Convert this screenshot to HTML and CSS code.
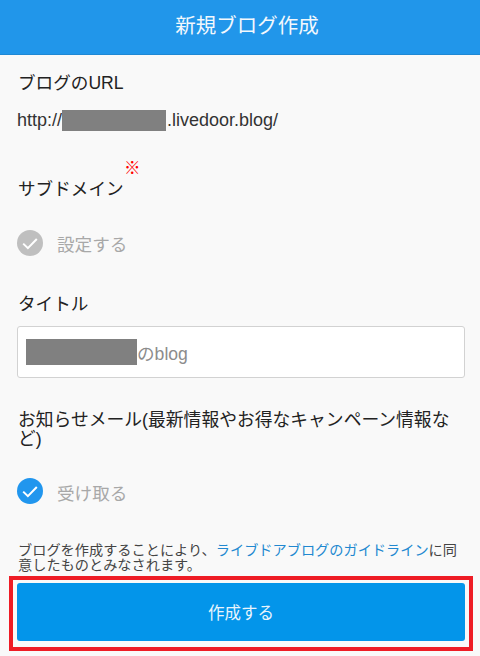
FILE: index.html
```html
<!DOCTYPE html>
<html lang="ja">
<head>
<meta charset="utf-8">
<title>新規ブログ作成</title>
<link rel="stylesheet" href="styles.css">
</head>
<body>
<header class="bar">新規ブログ作成</header>
<main class="form">
  <section class="url-block">
    <div class="label">ブログのURL</div>
    <div class="url"><span>http://</span><span class="mask mask-url"></span><span>.livedoor.blog/</span></div>
  </section>
  <section class="sub-block">
    <div class="label">サブドメイン<span class="req">※</span></div>
    <div class="check check-off">
      <svg class="tick" viewBox="0 0 26 26"><circle cx="13" cy="13" r="13" fill="#bfbfbf"/><path d="M6.2 13.6l4.7 4.6 8.9-9.2" fill="none" stroke="#fff" stroke-width="2"/></svg>
      <span>設定する</span>
    </div>
  </section>
  <section class="title-block">
    <div class="label">タイトル</div>
    <div class="input"><span class="mask mask-title"></span><span>のblog</span></div>
  </section>
  <section class="mail-block">
    <div class="label label-wrap">お知らせメール(最新情報やお得なキャンペーン情報など)</div>
    <div class="check check-on">
      <svg class="tick" viewBox="0 0 26 26"><circle cx="13" cy="13" r="13" fill="#2196ee"/><path d="M6.2 13.6l4.7 4.6 8.9-9.2" fill="none" stroke="#fff" stroke-width="2"/></svg>
      <span>受け取る</span>
    </div>
  </section>
  <p class="note">ブログを作成することにより、<a href="#">ライブドアブログのガイドライン</a>に同意したものとみなされます。</p>
</main>
<div class="highlight"><button class="submit" type="button">作成する</button></div>
</body>
</html>
```
FILE: styles.css
```css
* { box-sizing: border-box; }
html, body { margin: 0; padding: 0; }
body {
  width: 480px;
  height: 656px;
  overflow: hidden;
  background: #f9f9f9;
  color: #222;
  font-family: "Liberation Sans", "Noto Sans CJK JP", sans-serif;
  font-size: 18px;
}
.bar {
  height: 55px;
  padding-left: 14px;
  background: #2196ea;
  border-bottom: 1px solid #1f88d4;
  color: #f2f8fd;
  font-size: 20.5px;
  line-height: 52px;
  text-align: center;
}
.form { padding: 0 15px 0 18px; }
.label { font-size: 17.6px; line-height: 22px; position: relative; }
.url-block { padding-top: 17px; }
.url {
  display: flex;
  align-items: center;
  height: 22px;
  margin-top: 15px;
  margin-left: -1px;
  font-size: 18px;
  color: #333;
}
.mask { display: block; background: #808080; }
.mask-url { width: 104px; height: 21px; margin-right: 1px; }
.sub-block { padding-top: 47px; }
.req {
  position: absolute;
  left: 106px;
  top: -19px;
  color: #f00;
  font-size: 16.5px;
  line-height: 18px;
}
.check { display: flex; align-items: center; gap: 14px; color: #a8a8a8; font-size: 17.6px; }
.tick { width: 26px; height: 26px; flex: none; margin-left: -1px; }
.check-on span { position: relative; top: 1px; }
.sub-block .check { margin-top: 30px; }
.title-block { padding-top: 37px; }
.input {
  display: flex;
  align-items: center;
  height: 52px;
  margin-top: 11px;
  width: 448px;
  margin-left: -1px;
  padding-left: 8px;
  background: #fff;
  border: 1px solid #d2d2d2;
  border-radius: 3px;
  color: #8c8c8c;
  font-size: 17.6px;
}
.mask-title { width: 111px; height: 26px; }
.mail-block { padding-top: 33px; }
.label-wrap { font-size: 17.8px; line-height: 19px; }
.mail-block .check { margin-top: 29px; }
.note {
  margin: 39px 0 0;
  font-size: 14.2px;
  line-height: 15px;
  color: #444;
}
.note a { color: #2188d0; text-decoration: none; }
.highlight {
  margin: 3px 7px 0 9px;
  height: 75px;
  padding: 3px 4px;
  border: 4px solid #ee1c25;
}
.submit {
  display: block;
  width: 100%;
  height: 58px;
  border: 0;
  border-radius: 3px;
  background: #0395ea;
  color: #e8f4fc;
  font: inherit;
  font-size: 16.5px;
}
```
